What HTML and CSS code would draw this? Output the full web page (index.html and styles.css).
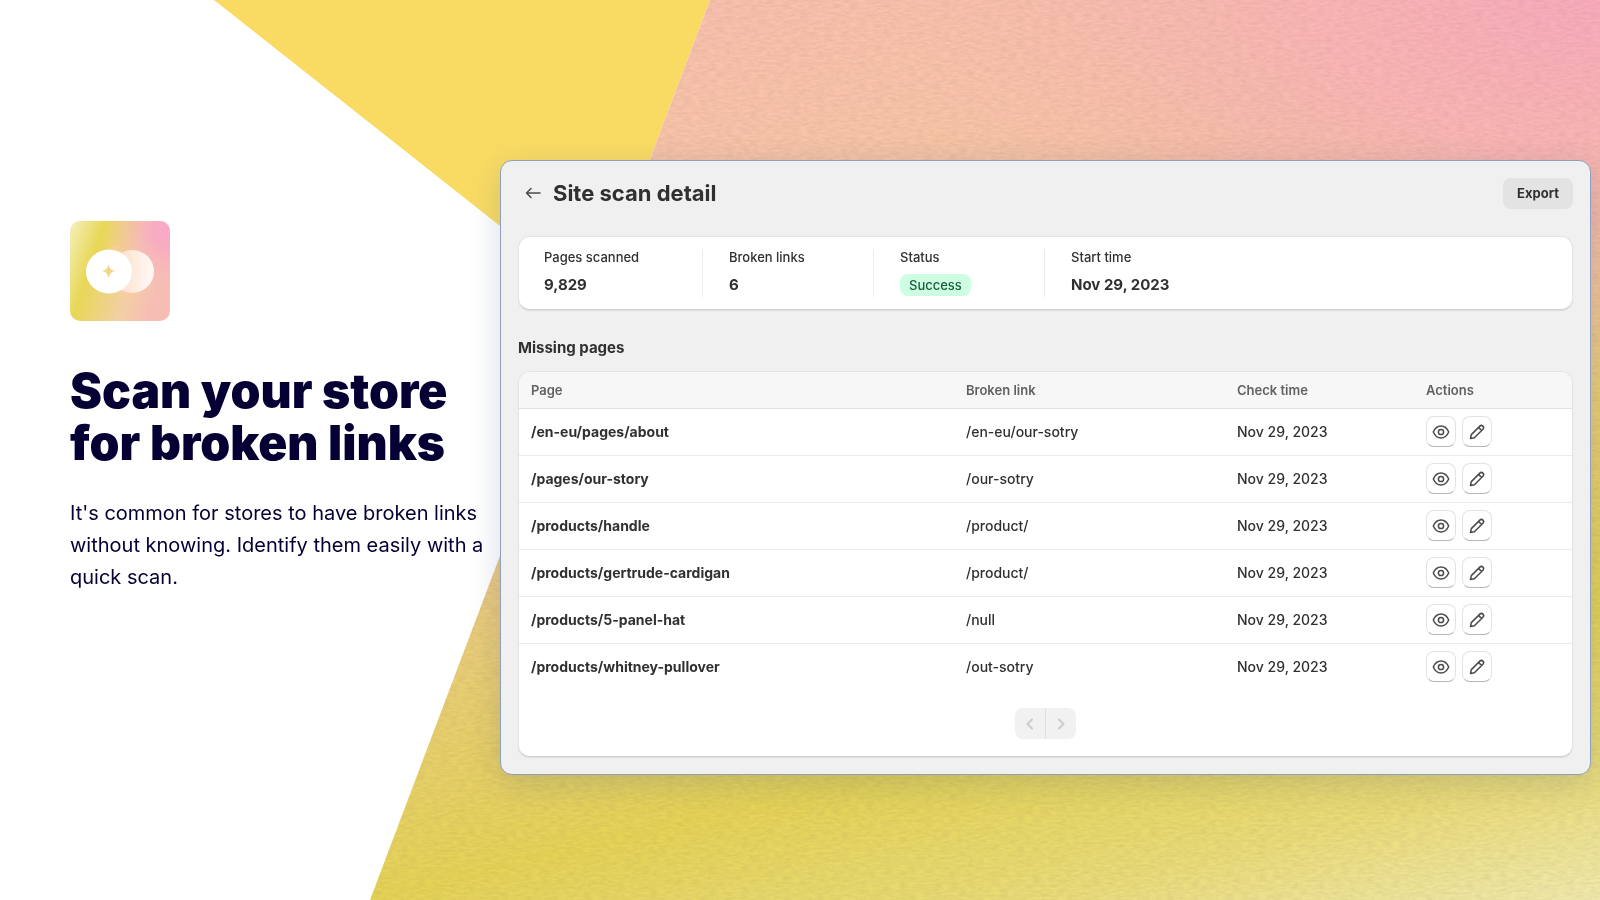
FILE: index.html
```html
<!DOCTYPE html>
<html lang="en">
<head>
<meta charset="utf-8">
<title>Site scan detail</title>
<link rel="stylesheet" href="styles.css">
</head>
<body>
<svg class="backdrop" viewBox="0 0 1600 900" preserveAspectRatio="none" aria-hidden="true">
  <defs>
    <linearGradient id="sweep" gradientUnits="userSpaceOnUse" x1="0" y1="0" x2="295" y2="1229">
      <stop offset=".13" stop-color="#f9c0af"/>
      <stop offset=".26" stop-color="#f8c5a8"/>
      <stop offset=".44" stop-color="#f2c799"/>
      <stop offset=".56" stop-color="#ebcd7e"/>
      <stop offset=".76" stop-color="#e5d457"/>
      <stop offset=".88" stop-color="#eadc78"/>
      <stop offset=".99" stop-color="#f1eaae"/>
    </linearGradient>
    <radialGradient id="pink" gradientUnits="userSpaceOnUse" cx="1600" cy="0" r="700" gradientTransform="translate(1600 0) scale(1 .56) translate(-1600 0)">
      <stop offset="0" stop-color="#faacbd"/>
      <stop offset=".4" stop-color="#fab2b9" stop-opacity=".8"/>
      <stop offset="1" stop-color="#fab8b4" stop-opacity="0"/>
    </radialGradient>
    <filter id="grain" x="0" y="0" width="1" height="1" color-interpolation-filters="sRGB">
      <feTurbulence type="fractalNoise" baseFrequency=".12 .4" numOctaves="3" seed="4"/>
      <feColorMatrix values="0 0 0 0 .4  0 0 0 0 .3  0 0 0 0 .25  .17 0 0 0 -.05"/>
      <feComposite in2="SourceGraphic" operator="in"/>
    </filter>
    <path id="field" d="M710 0H1600V900H370Z"/>
  </defs>
  <path d="M214 0H710L580 344L500 226Z" fill="#f9db64"/>
  <use href="#field" fill="url(#sweep)"/>
  <use href="#field" fill="url(#pink)"/>
  <use href="#field" fill="#000" filter="url(#grain)"/>
</svg>

<svg class="symbols" aria-hidden="true">
  <symbol id="eye" viewBox="0 0 20 20"><path d="M2.300 10C3.900 6.300 6.600 4 10 4S16.100 6.300 17.700 10C16.100 13.700 13.400 16 10 16S3.900 13.700 2.300 10Z"/><circle cx="10" cy="10" r="2.600"/></symbol>
  <symbol id="pencil" viewBox="0 0 20 20"><path d="M3.500 16.500L4.300 12.600L12.800 4.100A2.150 2.150 0 0 1 15.900 7.200L7.400 15.700ZM11.500 5.400L14.600 8.500"/></symbol>
</svg>

<main class="page">
  <section class="intro">
    <svg class="logo" viewBox="0 0 100 100" role="img" aria-label="App logo">
      <defs>
        <linearGradient id="tile" gradientUnits="userSpaceOnUse" x1="0" y1="0" x2="99" y2="33">
          <stop offset="0" stop-color="#f5f0bd"/>
          <stop offset=".32" stop-color="#e8d757"/>
          <stop offset=".74" stop-color="#f3cfa6"/>
          <stop offset="1" stop-color="#f6bdb5"/>
        </linearGradient>
        <radialGradient id="blush" gradientUnits="userSpaceOnUse" cx="98" cy="10" r="62">
          <stop offset="0" stop-color="#f9a8c8"/>
          <stop offset=".25" stop-color="#f9a8c4" stop-opacity=".9"/>
          <stop offset="1" stop-color="#f6bdb5" stop-opacity="0"/>
        </radialGradient>
        <linearGradient id="disc" x1="0" y1="0" x2="1" y2="0">
          <stop offset=".3" stop-color="#fde3cf"/>
          <stop offset="1" stop-color="#fff9f8"/>
        </linearGradient>
      </defs>
      <rect width="100" height="100" rx="10" fill="url(#tile)"/>
      <rect width="100" height="100" rx="10" fill="url(#blush)"/>
      <path d="M40 25Q45 21 50 27L70 60Q66 74 57 79Q54 79 46 68Z" fill="#fbcba0" opacity=".6"/>
      <ellipse cx="62" cy="50.500" rx="22" ry="21.500" fill="url(#disc)"/>
      <ellipse cx="39" cy="50.500" rx="23" ry="22" fill="#fff"/>
      <path d="M38.500 43.500Q39.500 49 45 50Q39.500 51 38.500 57Q37.500 51 32 50Q37.500 49 38.500 43.500Z" fill="#f5d488"/>
    </svg>
    <h1>Scan your store for broken links</h1>
    <p>It's common for stores to have broken links without knowing. Identify them easily with a quick scan.</p>
  </section>

  <section class="panel">
    <header class="bar">
      <a class="back" href="#" aria-label="Back"><svg viewBox="0 0 20 20"><path d="M17 10H3.500M8 5.500L3.500 10L8 14.500"/></svg></a>
      <h2>Site scan detail</h2>
      <button class="export" type="button">Export</button>
    </header>

    <dl class="card stats">
      <div class="wide"><dt>Pages scanned</dt><dd>9,829</dd></div>
      <div><dt>Broken links</dt><dd>6</dd></div>
      <div><dt>Status</dt><dd><span class="badge">Success</span></dd></div>
      <div><dt>Start time</dt><dd>Nov 29, 2023</dd></div>
    </dl>

    <h3>Missing pages</h3>
    <div class="card list">
      <table>
        <colgroup><col class="c-page"><col class="c-link"><col class="c-time"><col></colgroup>
        <thead><tr><th>Page</th><th>Broken link</th><th>Check time</th><th>Actions</th></tr></thead>
        <tbody>
          <tr><th scope="row">/en-eu/pages/about</th><td>/en-eu/our-sotry</td><td>Nov 29, 2023</td><td><div class="actions"><button type="button" aria-label="View"><svg><use href="#eye"/></svg></button><button type="button" aria-label="Edit"><svg><use href="#pencil"/></svg></button></div></td></tr>
          <tr><th scope="row">/pages/our-story</th><td>/our-sotry</td><td>Nov 29, 2023</td><td><div class="actions"><button type="button" aria-label="View"><svg><use href="#eye"/></svg></button><button type="button" aria-label="Edit"><svg><use href="#pencil"/></svg></button></div></td></tr>
          <tr><th scope="row">/products/handle</th><td>/product/</td><td>Nov 29, 2023</td><td><div class="actions"><button type="button" aria-label="View"><svg><use href="#eye"/></svg></button><button type="button" aria-label="Edit"><svg><use href="#pencil"/></svg></button></div></td></tr>
          <tr><th scope="row">/products/gertrude-cardigan</th><td>/product/</td><td>Nov 29, 2023</td><td><div class="actions"><button type="button" aria-label="View"><svg><use href="#eye"/></svg></button><button type="button" aria-label="Edit"><svg><use href="#pencil"/></svg></button></div></td></tr>
          <tr><th scope="row">/products/5-panel-hat</th><td>/null</td><td>Nov 29, 2023</td><td><div class="actions"><button type="button" aria-label="View"><svg><use href="#eye"/></svg></button><button type="button" aria-label="Edit"><svg><use href="#pencil"/></svg></button></div></td></tr>
          <tr><th scope="row">/products/whitney-pullover</th><td>/out-sotry</td><td>Nov 29, 2023</td><td><div class="actions"><button type="button" aria-label="View"><svg><use href="#eye"/></svg></button><button type="button" aria-label="Edit"><svg><use href="#pencil"/></svg></button></div></td></tr>
        </tbody>
      </table>
      <nav class="pager" aria-label="Pagination">
        <button type="button" disabled aria-label="Previous"><svg viewBox="0 0 20 20"><path d="M12 5.500L7.500 10L12 14.500"/></svg></button>
        <button type="button" disabled aria-label="Next"><svg viewBox="0 0 20 20"><path d="M8 5.500L12.500 10L8 14.500"/></svg></button>
      </nav>
    </div>
  </section>
</main>
</body>
</html>
```
FILE: styles.css
```css
* { box-sizing: border-box; }
body {
  margin: 0;
  background: #fff;
  color: #303030;
  font-family: Inter, "Liberation Sans", sans-serif;
  font-size: 14px;
  font-weight: 450;
  line-height: 20px;
}
h1, h2, h3, p, dl, dd { margin: 0; }
button { font: inherit; color: inherit; border: 0; padding: 0; cursor: pointer; }
svg { display: block; fill: none; stroke-linecap: round; stroke-linejoin: round; }
.symbols { position: absolute; width: 0; height: 0; }
.backdrop { position: fixed; inset: 0; width: 100%; height: 100%; z-index: -1; }

.page {
  min-height: 100vh;
  display: grid;
  grid-template-columns: 430px minmax(0, 1fr);
  align-items: start;
  padding: 160px 9px 0 70px;
}

.intro { padding-top: 61px; color: #040034; }
.logo { width: 100px; height: 100px; }
.intro h1 {
  margin-top: 44px;
  max-width: 400px;
  font-size: 48px;
  line-height: 52px;
  font-weight: 900;
}
.intro p { margin-top: 28px; max-width: 416px; font-size: 20px; line-height: 32px; font-weight: 400; }

.panel {
  padding: 16px 17px 17px;
  background: #f0f0f0;
  border: 1px solid #8f9fbc;
  border-radius: 12px;
  box-shadow: 0 8px 32px rgba(60, 80, 130, .2);
}
.bar { display: flex; align-items: center; height: 32px; }
.back { width: 20px; margin: 0 10px 0 5px; color: #4a4a4a; }
.back svg { width: 20px; height: 20px; stroke: currentColor; stroke-width: 1.5; }
.bar h2 { font-size: 22px; line-height: 28px; font-weight: 700; }
.export {
  margin-left: auto;
  height: 31px;
  padding: 0 14px;
  border-radius: 8px;
  background: #e3e3e3;
  font-size: 13px;
  font-weight: 700;
}

.card {
  background: #fff;
  border: 1px solid #e3e3e3;
  border-bottom-color: #d0d0d0;
  border-radius: 12px;
  box-shadow: 0 1px 1px rgba(0, 0, 0, .08);
}
.stats { display: flex; margin-top: 27px; padding: 12px 25px; }
.stats div { width: 171px; height: 48px; padding-left: 26px; border-left: 1px solid #ebebeb; }
.stats .wide { width: 158px; padding-left: 0; border-left: 0; }
.stats dt { font-size: 13px; line-height: 16px; }
.stats dd { margin-top: 9px; font-size: 15px; line-height: 22px; font-weight: 700; white-space: nowrap; }
.badge {
  display: block;
  width: max-content;
  padding: 0 9px;
  border-radius: 8px;
  background: #cdfee1;
  color: #1a5c3f;
  font-size: 13px;
  font-weight: 500;
}

h3 { margin-top: 28px; font-size: 15px; line-height: 20px; font-weight: 700; }
.list { margin-top: 13px; padding-bottom: 17px; overflow: hidden; }
table { width: 100%; border-collapse: collapse; table-layout: fixed; }
.c-page { width: 435px; }
.c-link { width: 271px; }
.c-time { width: 189px; }
th, td { padding: 0 0 0 12px; text-align: left; white-space: nowrap; }
thead th {
  height: 36px;
  background: #f7f7f7;
  border-bottom: 1px solid #e3e3e3;
  color: #616161;
  font-size: 13px;
  font-weight: 600;
}
thead th, tbody th, tbody td { vertical-align: middle; }
tbody th, tbody td { height: 47px; border-bottom: 1px solid #ebebeb; }
tbody tr:last-child > * { border-bottom: 0; }
tbody th { font-weight: 700; }
.actions { display: flex; gap: 6px; }
.actions button {
  display: grid;
  place-items: center;
  width: 30px;
  height: 31px;
  border: 1px solid #e3e3e3;
  border-bottom-color: #b5b5b5;
  border-radius: 8px;
  background: #fff;
}
.actions svg { width: 20px; height: 20px; stroke: #4a4a4a; stroke-width: 1.5; }

.pager { display: flex; justify-content: center; margin-top: 18px; }
.pager button { display: grid; place-items: center; width: 30px; height: 31px; background: #f1f1f1; }
.pager button:first-child { border-radius: 8px 0 0 8px; }
.pager button:last-child { width: 31px; border-left: 1px solid #e0e0e0; border-radius: 0 8px 8px 0; }
.pager svg { width: 20px; height: 20px; stroke: #ccc; stroke-width: 2; }
```
